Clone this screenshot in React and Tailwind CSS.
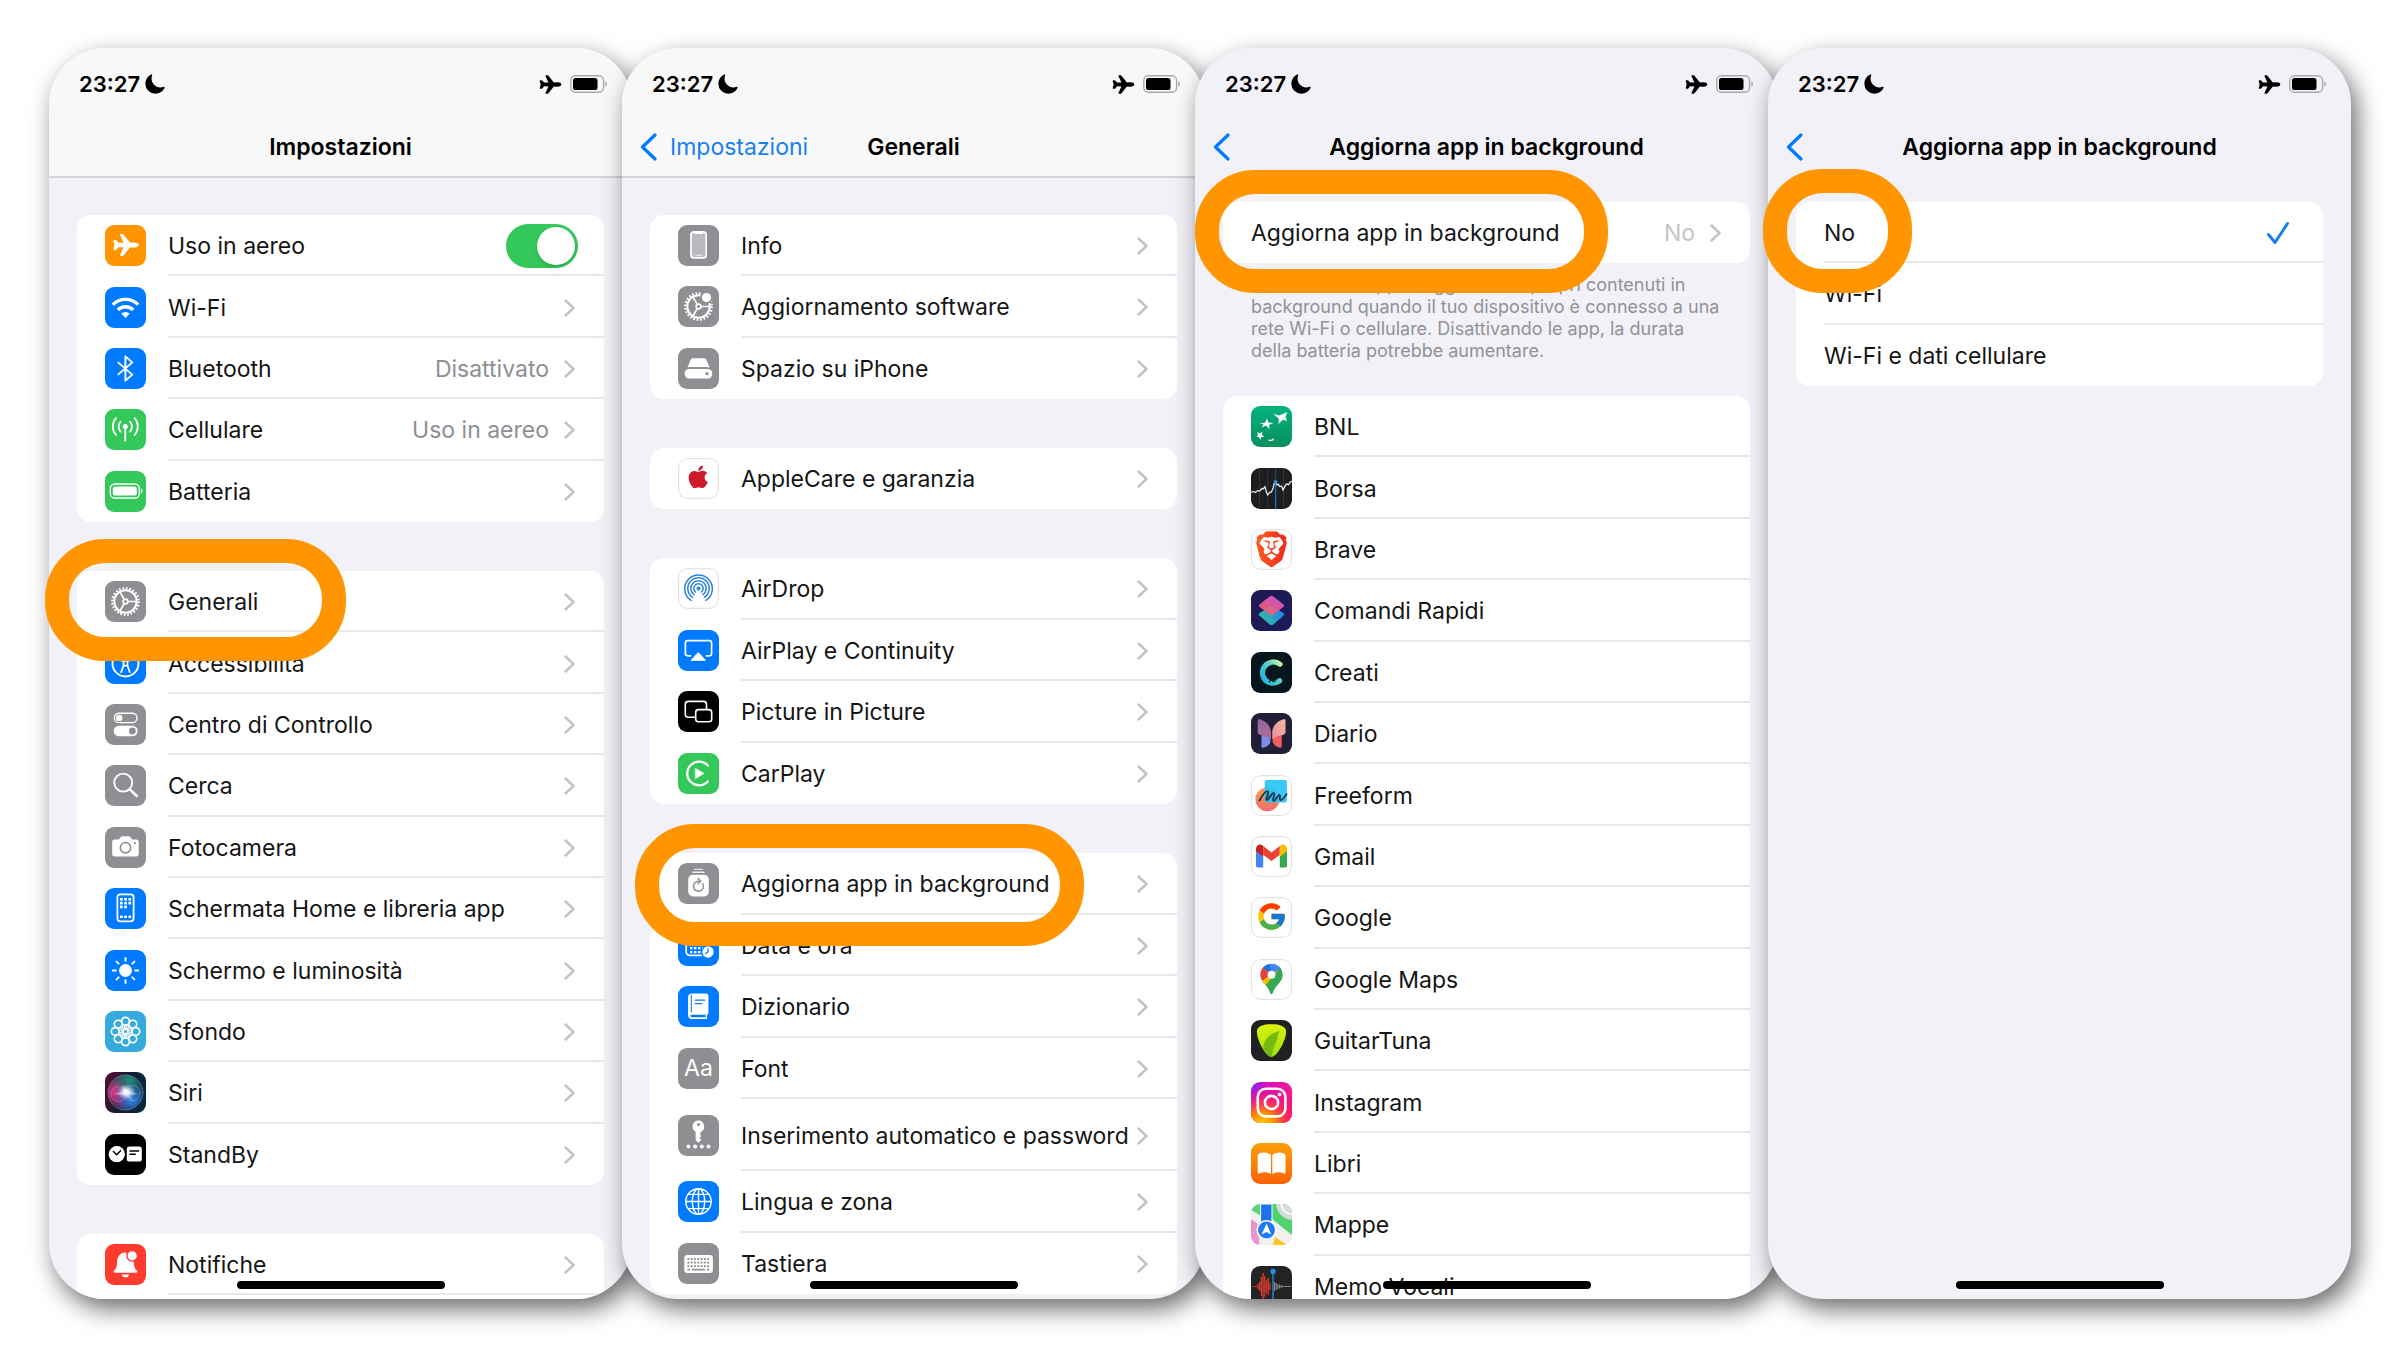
import { FaApple } from 'react-icons/fa';
import { FcGoogle } from 'react-icons/fc';
import { IoAirplane, IoMoon } from 'react-icons/io5';
import { SiBrave } from 'react-icons/si';

const BLUE = '#007aff';
const GRAY = '#8e8e93';
const GREEN = '#34c759';

// Rounded app tile, glyphs are drawn on a 41x41 grid
const Tile = ({ bg = '#fff', outlined, children }) => (
  <svg viewBox="0 0 41 41" className="w-[41px] h-[41px] shrink-0 rounded-[9px]" aria-hidden="true" fill="none" strokeLinecap="round" strokeLinejoin="round">
    <rect width="41" height="41" fill={bg} />
    {children}
    {outlined && <rect x="0.6" y="0.6" width="39.8" height="39.8" rx="8.6" stroke="#e4e4e8" strokeWidth="1.2" />}
  </svg>
);

const GearShape = () => (
  <g stroke="#fff">
    <circle cx="20.5" cy="20.5" r="13.2" strokeWidth="2.4" strokeDasharray="1.7 1.755" strokeLinecap="butt" />
    <circle cx="20.5" cy="20.5" r="11.2" strokeWidth="2" />
    <circle cx="20.5" cy="20.5" r="2.4" strokeWidth="1.6" />
    <path d="M23 20.5h9M19.2 18.3l-4.5-7.8M19.2 22.7l-4.5 7.8" strokeWidth="1.7" />
  </g>
);

/* ---------- Impostazioni ---------- */

const AirplaneIcon = () => (
  <Tile bg="#ff9500">
    <IoAirplane x="7.5" y="6.5" size={27} color="#fff" />
  </Tile>
);

const WifiIcon = () => (
  <Tile bg={BLUE}>
    <g stroke="#fff" strokeWidth="3.4" strokeLinecap="butt">
      <path d="M7.8 17.6a18 18 0 0 1 25.4 0" />
      <path d="M12.8 22.9a11 11 0 0 1 15.4 0" />
    </g>
    <path d="M20.5 31l-4.2-4.4a6 6 0 0 1 8.4 0z" fill="#fff" />
  </Tile>
);

const BluetoothIcon = () => (
  <Tile bg={BLUE}>
    <path d="M13.3 14.6L27.3 26.6 20.4 32.6V8.4L27.3 14.4 13.3 26.4" stroke="#fff" strokeWidth="1.9" />
  </Tile>
);

const CellularIcon = () => (
  <Tile bg={GREEN}>
    <circle cx="20.3" cy="17.6" r="2.5" fill="#fff" />
    <g stroke="#fff" strokeWidth="1.8">
      <path d="M20.3 18v13.5" />
      <path d="M15.6 22.6a7.4 7.4 0 0 1 0-10M25 22.6a7.4 7.4 0 0 0 0-10" />
      <path d="M11 26a12.6 12.6 0 0 1 0-16.8M29.6 26a12.6 12.6 0 0 0 0-16.8" />
    </g>
  </Tile>
);

const BatteryIcon = () => (
  <Tile bg={GREEN}>
    <rect x="5.3" y="13" width="29" height="14" rx="4.6" stroke="#fff" strokeWidth="1.4" />
    <rect x="7.8" y="15.4" width="24" height="9.2" rx="2.6" fill="#fff" />
    <path d="M35.9 17.6c2.2.8 2.2 4 0 4.8z" fill="#fff" />
  </Tile>
);

const GearIcon = () => (
  <Tile bg={GRAY}>
    <GearShape />
  </Tile>
);

const AccessibilityIcon = () => (
  <Tile bg={BLUE}>
    <circle cx="20.5" cy="20.5" r="13" stroke="#fff" strokeWidth="1.9" />
    <circle cx="20.5" cy="12.6" r="2.1" fill="#fff" />
    <path d="M13.5 16.8l5 1.2v4.6l-2.3 6.6M27.5 16.8l-5 1.2v4.6l2.3 6.6M18.5 18h4M18.5 22.6h4" stroke="#fff" strokeWidth="1.7" />
  </Tile>
);

const ControlCenterIcon = () => (
  <Tile bg={GRAY}>
    <rect x="9.4" y="9.2" width="22.6" height="9.4" rx="4.7" stroke="#fff" strokeWidth="1.4" />
    <circle cx="14.2" cy="13.9" r="3.2" fill="#fff" />
    <rect x="8.7" y="21.8" width="24" height="10.4" rx="5.2" fill="#fff" />
    <circle cx="27.4" cy="27" r="3.4" fill={GRAY} />
  </Tile>
);

const SearchIcon = () => (
  <Tile bg={GRAY}>
    <circle cx="18.2" cy="17.6" r="9" stroke="#fff" strokeWidth="1.9" />
    <path d="M25 24.6l6.8 6.4" stroke="#fff" strokeWidth="2.6" />
  </Tile>
);

const CameraIcon = () => (
  <Tile bg={GRAY}>
    <path d="M10 12.4h3.8l2-2.5c.4-.4.8-.6 1.4-.6h6.6c.6 0 1 .2 1.4.6l2 2.5H31c1.8 0 2.8 1 2.8 2.8v11.6c0 1.8-1 2.8-2.8 2.8H10c-1.8 0-2.8-1-2.8-2.8V15.2c0-1.8 1-2.8 2.8-2.8z" fill="#fff" />
    <circle cx="20.5" cy="20.7" r="5.2" stroke={GRAY} strokeWidth="1.6" />
    <circle cx="29.8" cy="16.2" r="1.1" fill={GRAY} />
  </Tile>
);

const HomeScreenIcon = () => (
  <Tile bg={BLUE}>
    <rect x="12.4" y="6.3" width="16.2" height="27" rx="3" stroke="#fff" strokeWidth="1.8" />
    <g fill="#fff">
      {[10, 13.8, 17.6].map((y) =>
        [15, 19.2, 23.4].map((x) => (
          <rect key={`${x}-${y}`} x={x} y={y} width="2.7" height="2.7" rx="0.6" opacity={y > 17 && x > 20 ? 0 : 1} />
        ))
      )}
      {[15, 19.2, 23.4].map((x) => (
        <rect key={x} x={x} y="27.6" width="2.7" height="2.4" rx="0.6" />
      ))}
    </g>
  </Tile>
);

const SunIcon = () => (
  <Tile bg={BLUE}>
    <circle cx="20.5" cy="20.5" r="6.4" fill="#fff" />
    {[0, 45, 90, 135, 180, 225, 270, 315].map((a) => (
      <path key={a} d="M20.5 7.9v2.9" stroke="#fff" strokeWidth="2" transform={`rotate(${a} 20.5 20.5)`} />
    ))}
  </Tile>
);

const WallpaperIcon = () => (
  <Tile bg="#35aadc">
    {[0, 45, 90, 135, 180, 225, 270, 315].map((a) => (
      <g key={a} transform={`rotate(${a} 20.5 20.5)`} stroke="#fff">
        <circle cx="20.5" cy="10.2" r="3.9" strokeWidth="1.7" />
        <path d="M19 14l1.5 5 1.5-5" strokeWidth="1.2" />
      </g>
    ))}
    <circle cx="20.5" cy="20.5" r="2.2" fill="#35aadc" stroke="#fff" strokeWidth="1.3" />
  </Tile>
);

const SiriIcon = () => (
  <Tile bg="url(#siriBg)">
    <defs>
      <linearGradient id="siriBg" x1="0" y1="0" x2="1" y2="0.3">
        <stop offset="0" stopColor="#5c0a2c" />
        <stop offset="0.5" stopColor="#1c1c30" />
        <stop offset="1" stopColor="#06293f" />
      </linearGradient>
      <radialGradient id="siriPink" cx="0.22" cy="0.48" r="0.6">
        <stop offset="0" stopColor="#e0388a" />
        <stop offset="1" stopColor="#e0388a" stopOpacity="0" />
      </radialGradient>
      <radialGradient id="siriTeal" cx="0.62" cy="0.15" r="0.55">
        <stop offset="0" stopColor="#1d8f7c" />
        <stop offset="1" stopColor="#1d8f7c" stopOpacity="0" />
      </radialGradient>
      <radialGradient id="siriBlue" cx="0.68" cy="0.72" r="0.5">
        <stop offset="0" stopColor="#2f86e8" />
        <stop offset="1" stopColor="#2f86e8" stopOpacity="0" />
      </radialGradient>
      <radialGradient id="siriCore">
        <stop offset="0" stopColor="#fff" />
        <stop offset="0.3" stopColor="#e8f2ff" stopOpacity="0.9" />
        <stop offset="1" stopColor="#b7c8ff" stopOpacity="0" />
      </radialGradient>
    </defs>
    <circle cx="20.5" cy="20.5" r="17.5" fill="#1b1a3a" />
    <circle cx="20.5" cy="20.5" r="17.5" fill="url(#siriPink)" />
    <circle cx="20.5" cy="20.5" r="17.5" fill="url(#siriTeal)" />
    <circle cx="20.5" cy="20.5" r="17.5" fill="url(#siriBlue)" />
    <circle cx="20.5" cy="20.5" r="17.5" stroke="#6b9aa0" strokeOpacity="0.6" />
    <circle cx="13.5" cy="22" r="7.5" stroke="#f06ab0" strokeOpacity="0.6" />
    <circle cx="27" cy="21" r="8" stroke="#51b7f0" strokeOpacity="0.5" />
    <ellipse cx="21.5" cy="20" rx="9.5" ry="8" fill="url(#siriCore)" />
    <path d="M18 13.5l5 5.5 11 3-10 1 4 6-8-5.5L9 22l8-2.5z" fill="#fff" fillOpacity="0.35" />
  </Tile>
);

const StandByIcon = () => (
  <Tile bg="#000">
    <circle cx="11.8" cy="20.2" r="8.1" fill="#fff" />
    <path d="M8.4 17.5l3.2 3.3 4-4" stroke="#000" strokeWidth="1.5" />
    <rect x="21.8" y="12.6" width="15" height="15" rx="2.6" fill="#fff" />
    <path d="M25 17h8.6M25 20.3h5.2" stroke="#000" strokeWidth="1.5" />
  </Tile>
);

const BellIcon = () => (
  <Tile bg="#ff3b30">
    <path d="M20.5 8.2c-5.6.6-8.4 4.6-8.4 9.6 0 5-1.2 7.2-3 8.8-.9.9-.4 2.2.9 2.2h21c1.3 0 1.8-1.3.9-2.2-1.8-1.6-3-3.800-3-8.800z" fill="#fff" />
    <path d="M16.800 30.600h7.400c-.4 1.900-1.900 3-3.700 3s-3.300-1.100-3.700-3z" fill="#fff" />
    <circle cx="27.2" cy="11.8" r="6" fill="#ff3b30" />
    <circle cx="27.2" cy="11.8" r="4.6" fill="#fff" />
  </Tile>
);

/* ---------- Generali ---------- */

const InfoIcon = () => (
  <Tile bg={GRAY}>
    <rect x="13" y="6.9" width="15.2" height="26" rx="3" fill="#b9b9be" stroke="#fff" strokeWidth="1.7" />
    <path d="M17.2 7.8h6.8" stroke="#fff" strokeWidth="2.4" />
    <path d="M17.6 30.3h6" stroke="#e4e4e6" strokeWidth="1.2" />
  </Tile>
);

const UpdateIcon = () => (
  <Tile bg={GRAY}>
    <GearShape />
    <circle cx="28.5" cy="11.5" r="6.3" fill={GRAY} />
    <circle cx="28.5" cy="11.5" r="4.6" fill="#fff" />
  </Tile>
);

const StorageIcon = () => (
  <Tile bg={GRAY}>
    <path d="M12.8 11.6c.3-.9 1-1.4 2-1.4h11.4c1 0 1.700.5 2 1.400l3.400 8c-.8-.4-1.800-.6-2.800-.6H12.200c-1 0-2 .2-2.800.6z" fill="#fff" />
    <rect x="6.8" y="21" width="27.4" height="9.4" rx="4.2" fill="#fff" />
    <circle cx="29" cy="25.7" r="1.6" fill={GRAY} />
  </Tile>
);

const AppleCareIcon = () => (
  <Tile outlined>
    <FaApple x="7.2" y="5.8" size={26} color="#cf1a2c" />
  </Tile>
);

const AirDropIcon = () => (
  <Tile outlined>
    <g stroke="#2f83d6" strokeWidth="1.5">
      <path d="M13.2 32.4a13.8 13.8 0 1 1 14.6 0" />
      <path d="M14.6 29.3a10.7 10.7 0 1 1 11.8 0" />
      <path d="M16 26.6a7.7 7.7 0 1 1 9 0" />
      <path d="M17.5 24a4.7 4.7 0 1 1 6 0" />
    </g>
    <circle cx="20.5" cy="20.5" r="2" fill="#2f83d6" />
  </Tile>
);

const AirPlayIcon = () => (
  <Tile bg={BLUE}>
    <path d="M12.6 25.8H9.6c-1.4 0-2.2-.8-2.2-2.2V12.9c0-1.4.8-2.2 2.2-2.2h21.8c1.4 0 2.2.8 2.2 2.2v10.7c0 1.4-.8 2.2-2.2 2.2h-3" stroke="#fff" strokeWidth="1.7" />
    <path d="M20.5 22.8l7 7.5h-14z" fill="#fff" stroke="#fff" strokeWidth="1" />
  </Tile>
);

const PipIcon = () => (
  <Tile bg="#000">
    <rect x="7.3" y="10.4" width="21.2" height="15.8" rx="3" stroke="#fff" strokeWidth="1.6" />
    <rect x="17.7" y="18.6" width="16" height="12.2" rx="2.8" fill="#000" stroke="#fff" strokeWidth="1.6" />
  </Tile>
);

const CarPlayIcon = () => (
  <Tile bg={GREEN}>
    <path d="M29.8 12.6a11.8 11.8 0 1 0 0 15.8" stroke="#fff" strokeWidth="2.3" />
    <path d="M17.6 15.6l8.2 4.9-8.2 4.9z" fill="#fff" stroke="#fff" strokeWidth="0.8" />
  </Tile>
);

const RefreshIcon = () => (
  <Tile bg={GRAY}>
    <path d="M16.4 6.3h8.2" stroke="#fff" strokeWidth="1.3" opacity="0.7" />
    <path d="M14.8 9.2h11.4" stroke="#fff" strokeWidth="1.5" opacity="0.85" />
    <rect x="10.2" y="11.8" width="20.6" height="21.6" rx="4.6" fill="#fff" />
    <path d="M24.9 20.8a5 5 0 1 1-4.4-2.6h.8" stroke={GRAY} strokeWidth="1.5" />
    <path d="M20 15.4l2.9 2.7-2.8 2.7" stroke={GRAY} strokeWidth="1.4" />
  </Tile>
);

const DateIcon = () => (
  <Tile bg={BLUE}>
    <rect x="8.2" y="9" width="23.6" height="21.4" rx="3.6" stroke="#fff" strokeWidth="1.7" />
    <path d="M8.6 12.6h23" stroke="#fff" strokeWidth="4" />
    <g fill="#fff">
      {[18, 22, 26].map((y) => [12, 16, 20, 24].map((x) => <rect key={`${x}-${y}`} x={x} y={y} width="2.5" height="2.3" rx="0.5" />))}
    </g>
    <circle cx="30" cy="27" r="7" fill={BLUE} />
    <circle cx="30" cy="27" r="5.7" fill="#fff" />
    <path d="M30 23.6V27l-2.4 1.6" stroke={BLUE} strokeWidth="1.2" />
  </Tile>
);

const DictionaryIcon = () => (
  <Tile bg={BLUE}>
    <path d="M14 7.6h14c1.6 0 2.4.8 2.4 2.4v16.4c0 1.2-.5 2-1.4 2.3v3.3c0 .6.5 1 1 1H14c-2.4 0-4-1.5-4-3.8V11c0-2.2 1.6-3.4 4-3.4z" fill="#fff" />
    <path d="M13.3 9v17" stroke={BLUE} strokeWidth="1" />
    <path d="M27.6 28.8H14c-1 0-1.6.5-1.6 1.2s.6 1.2 1.6 1.2h13.6z" fill={BLUE} />
    <path d="M17.3 14.2h9.4M17.3 17.6h6.4" stroke={BLUE} strokeWidth="1.3" />
  </Tile>
);

const FontIcon = () => (
  <span className="flex items-center justify-center w-[41px] h-[41px] shrink-0 rounded-[9px] bg-[#8e8e93] text-white text-[23px] leading-none" aria-hidden="true">
    Aa
  </span>
);

const KeyIcon = () => (
  <Tile bg={GRAY}>
    <path d="M20.5 5.6a6 6 0 0 0-2.9 11.2v8.4l2.9 2.6 2.8-2.9-1.8-1.9 1.8-2-1.5-1.5 1.4-2.7A6 6 0 0 0 20.5 5.6z" fill="#fff" />
    <circle cx="20.5" cy="9.6" r="1.5" fill={GRAY} />
    {[10.4, 17.1, 23.8, 30.5].map((x) => (
      <circle key={x} cx={x} cy="31.5" r="2" fill="#fff" />
    ))}
  </Tile>
);

const GlobeIcon = () => (
  <Tile bg={BLUE}>
    <g stroke="#fff" strokeWidth="1.4">
      <circle cx="20.5" cy="20.5" r="12.7" />
      <ellipse cx="20.5" cy="20.5" rx="6.2" ry="12.7" />
      <path d="M20.5 7.8v25.4M7.8 20.5h25.4M10.2 13.4h20.6M10.2 27.6h20.6" />
    </g>
  </Tile>
);

const KeyboardIcon = () => (
  <Tile bg={GRAY}>
    <rect x="6.3" y="12" width="28.6" height="18" rx="3" fill="#fff" />
    <g fill={GRAY}>
      {[15, 18.6, 22.2].map((y) => [9.4, 12.7, 16, 19.3, 22.6, 25.9, 29.2].map((x) => <rect key={`${x}-${y}`} x={x} y={y} width="1.9" height="1.9" />))}
      <rect x="14" y="25.8" width="13" height="1.7" />
      <rect x="9.4" y="25.8" width="2.2" height="1.7" />
      <rect x="29" y="25.8" width="2.2" height="1.7" />
    </g>
  </Tile>
);

/* ---------- App icons ---------- */

const BnlIcon = () => (
  <Tile bg="url(#bnl)">
    <linearGradient id="bnl" x1="0" y1="0" x2="0" y2="1">
      <stop offset="0" stopColor="#04b381" />
      <stop offset="1" stopColor="#088f5c" />
    </linearGradient>
    <g fill="#fff">
      <path d="M22.5 8l5.6 1.4L36.500 6l-2 4.600 1.600 4.400-4.400-1.300-4.200 4.300.4-5z" />
      <path d="M8.500 17.200l5.200-.3 2.400-4.500 1.200 4.200 5.400.4-4.600 1.700.4 4.300-3.600-3.400-4.500 2 2.200-3.200z" />
      <path d="M6 26.200l3 1.300 2.400-2-.4 3.200 2.200 2.200-3 .2-.6 2.600-1.800-2.600-2.200-.4 1.500-1.700z" />
      <path d="M17 33.600l2.500.3 3.600-2-.9 2.600-2.800.8-1.800-.5z" />
    </g>
  </Tile>
);

const StocksIcon = () => (
  <Tile bg="#1d1d1f">
    <path d="M8.5 0v41M16.7 0v41M32.5 0v41" stroke="#343437" />
    <path d="M24.6 13v28" stroke="#1777b5" strokeWidth="1.3" />
    <path d="M24.6 0v14" stroke="#1f4a66" strokeWidth="1.3" />
    <path d="M0 24.5l2.5-1 1.8 1 2.6-2 1.8.6 2.2-2.6 1.4.3 1.6-2.3 1.5 5.6 1.3 3 1.8-2.6 1.9-.5 1.7-3.7 1-4.6 1.5-1.2 1.3 2.3 1.6-.6 1.3 2.5 1.9-.6 1.300 4.200 2-4.200 1.700-2.400 1.900 1.200 1.300-2.700 2.100-.9" stroke="#e8e8ea" strokeWidth="1.3" />
    <circle cx="24.6" cy="14" r="1.9" fill="#2196e0" />
  </Tile>
);

const BraveIcon = () => (
  <Tile outlined>
    <linearGradient id="brave" x1="0" y1="0" x2="1" y2="0">
      <stop offset="0" stopColor="#ff5a1f" />
      <stop offset="1" stopColor="#ee2a1c" />
    </linearGradient>
    <SiBrave x="2.5" y="2.2" size={36} fill="url(#brave)" />
  </Tile>
);

const ShortcutsIcon = () => (
  <Tile bg="#1e1a56">
    <defs>
      <linearGradient id="scTop" x1="0.8" y1="0" x2="0.2" y2="1">
        <stop offset="0" stopColor="#d658e0" />
        <stop offset="0.45" stopColor="#e85a9c" />
        <stop offset="1" stopColor="#f0655a" />
      </linearGradient>
      <linearGradient id="scBottom" x1="0" y1="0.8" x2="1" y2="0.2">
        <stop offset="0" stopColor="#36c49a" />
        <stop offset="1" stopColor="#1f7df0" />
      </linearGradient>
    </defs>
    <path d="M18.7 16.6c1.2-.7 2.4-.7 3.6 0l10 6.4c1.3.9 1.3 1.9 0 2.8l-10 8.6c-1.2.9-2.4.9-3.6 0l-10-8.6c-1.3-.9-1.3-1.9 0-2.8z" fill="url(#scBottom)" />
    <path d="M18.7 6.4c1.2-.9 2.4-.9 3.6 0l10 7.8c1.3.9 1.3 1.9 0 2.8l-10 7.6c-1.2.9-2.4.9-3.6 0l-10-7.6c-1.3-.9-1.3-1.9 0-2.8z" fill="url(#scTop)" fillOpacity="0.93" />
  </Tile>
);

const CreatiIcon = () => (
  <Tile bg="#07161c">
    <linearGradient id="creati" x1="1" y1="0" x2="0.1" y2="0.8">
      <stop offset="0" stopColor="#c8f5b0" />
      <stop offset="0.4" stopColor="#5fd8c0" />
      <stop offset="1" stopColor="#2cb6dc" />
    </linearGradient>
    <path d="M29 12.2c-5.500-4.300-13-2.200-16.200 3.400-3 5.600-.6 12.600 4.800 14.800 4.200 1.500 7.800.8 11-1.600" stroke="url(#creati)" strokeWidth="5.2" />
    <path d="M18.5 29.8l2-2.6 1.7 2.4 2.4-.8" stroke="#07161c" strokeWidth="1.2" />
  </Tile>
);

const JournalIcon = () => (
  <Tile bg="#211f38">
    <defs>
      <linearGradient id="jL" x1="0" y1="0" x2="0" y2="1">
        <stop offset="0" stopColor="#8d6aa0" />
        <stop offset="1" stopColor="#b56a92" />
      </linearGradient>
      <linearGradient id="jR" x1="1" y1="0" x2="0" y2="1">
        <stop offset="0" stopColor="#f5b7a0" />
        <stop offset="1" stopColor="#ea8f95" />
      </linearGradient>
    </defs>
    <path d="M6.7 7.6c0-1.2.8-1.7 2-1.3 6 2 10.5 5.8 11.3 12.4v7.8L8.3 21.5c-1-.5-1.6-1.3-1.6-2.5z" fill="url(#jL)" />
    <path d="M34.5 7.6c0-1.2-.8-1.7-2-1.3-6 2-10.5 5.8-11.3 12.4v7.8l11.7-5c1-.5 1.6-1.3 1.6-2.5z" fill="url(#jR)" />
    <path d="M10.5 22.4c5.4 1 8.8 2.4 9.2 5.6-.8 3.8-3.4 5.9-7.4 6.7-1.2.2-1.8-.4-1.8-1.5z" fill="#7d8bea" />
    <path d="M30.7 22.4c-5.4 1-8.8 2.4-9.2 5.6.8 3.8 3.4 5.9 7.4 6.7 1.2.2 1.8-.4 1.8-1.5z" fill="#f0605c" />
  </Tile>
);

const FreeformIcon = () => (
  <Tile outlined>
    <linearGradient id="ffBall" x1="0" y1="0" x2="0" y2="1">
      <stop offset="0" stopColor="#f9a04c" />
      <stop offset="1" stopColor="#f76a6c" />
    </linearGradient>
    <circle cx="16.5" cy="24.2" r="12" fill="url(#ffBall)" />
    <rect x="13.7" y="5" width="22.2" height="22.4" rx="1.8" fill="#27c4f5" fillOpacity="0.92" />
    <path d="M8.5 25.5c3-5.6 6.5-9.8 8.3-9 2.2 1-3.2 8-1 8.4 2 .3 4.8-7.6 7-6.8 1.8.7-2 7.2-.2 7.7 2 .5 4.2-6.4 5.9-5.8 1.5.6-.8 4.6 1 5 1.7.4 4-3 6-5.8" stroke="#173a56" strokeWidth="1.9" />
  </Tile>
);

const GmailIcon = () => (
  <Tile outlined>
    <path d="M5 14.5v15.3c0 1 .7 1.7 1.7 1.7h5.5V18.5z" fill="#4285f4" />
    <path d="M36 14.5v15.3c0 1-.7 1.7-1.7 1.7h-5.5V18.5z" fill="#34a853" />
    <path d="M28.8 10l-8.3 6.4L12.2 10v8.7l8.3 6.3 8.3-6.3z" fill="#ea4335" />
    <path d="M5 13v2.3l7.2 5.4V10l-1-.8C8.6 7.3 5 9.3 5 13z" fill="#c5221f" />
    <path d="M36 13v2.3l-7.2 5.4V10l1-.8C32.4 7.3 36 9.3 36 13z" fill="#fbbc04" />
  </Tile>
);

const GoogleIcon = () => (
  <Tile outlined>
    <FcGoogle x="4.5" y="3.5" size={32} />
  </Tile>
);

const GoogleMapsIcon = () => (
  <Tile outlined>
    <clipPath id="pin">
      <path d="M20.5 5C14.2 5 9.5 9.7 9.5 15.7c0 4.3 2.3 6.9 4.9 10 2.5 2.9 4 4.8 4.9 8.3.4 1.4 2 1.4 2.4 0 .9-3.5 2.4-5.4 4.9-8.3 2.6-3.1 4.9-5.7 4.9-10C31.5 9.7 26.8 5 20.5 5z" />
    </clipPath>
    <g clipPath="url(#pin)">
      <rect x="8" y="3" width="25" height="34" fill="#34a853" />
      <path d="M8 3h18l-5.5 12.5L12 9z" fill="#1a73e8" />
      <path d="M18 3h12l2 8-11.5 4.5z" fill="#4285f4" />
      <path d="M12 8.5l8.5 7L11 26l-4-6V12z" fill="#ea4335" />
      <path d="M20.5 15.5L10.5 22l3.5 5.5L28 10.5z" fill="#fbbc04" />
      <path d="M30 8L14 27l6 9 14-20z" fill="#34a853" />
    </g>
    <circle cx="20.5" cy="15.7" r="3.9" fill="#fff" />
  </Tile>
);

const GuitarTunaIcon = () => (
  <Tile bg="#201f22">
    <linearGradient id="pick" x1="0" y1="0" x2="0" y2="1">
      <stop offset="0" stopColor="#dcf20c" />
      <stop offset="1" stopColor="#9be010" />
    </linearGradient>
    <path d="M20.5 4.3c8.6 0 14.6 1.8 14.6 7.6 0 8-8.8 24.9-14.6 24.9S5.9 19.9 5.9 11.9c0-5.8 6-7.6 14.600-7.600z" fill="url(#pick)" />
    <path d="M12 28.500c1-8.500 6-15 17-17.500-3 3.500-1.400 6.600-4.600 12.500-1.800 3.400-3 8-3.400 13.200-3 .5-6.400-3.800-9-8.200z" fill="#76b90f" />
  </Tile>
);

const InstagramIcon = () => (
  <Tile bg="url(#igBase)">
    <defs>
      <linearGradient id="igBase" x1="0" y1="0" x2="1" y2="0.6">
        <stop offset="0" stopColor="#7a28f0" />
        <stop offset="0.35" stopColor="#e010c0" />
        <stop offset="1" stopColor="#fb1a74" />
      </linearGradient>
      <radialGradient id="igWarm" cx="0.28" cy="1.05" r="0.9">
        <stop offset="0" stopColor="#ffd600" />
        <stop offset="0.35" stopColor="#ff8a00" />
        <stop offset="0.7" stopColor="#ff2a50" stopOpacity="0.6" />
        <stop offset="1" stopColor="#ff0069" stopOpacity="0" />
      </radialGradient>
    </defs>
    <rect width="41" height="41" fill="url(#igWarm)" />
    <rect x="6.8" y="6.8" width="27.6" height="27.6" rx="8" stroke="#fff" strokeWidth="2.6" />
    <circle cx="20.5" cy="20.5" r="6.6" stroke="#fff" strokeWidth="2.6" />
    <circle cx="28.6" cy="12.6" r="1.9" fill="#fff" />
  </Tile>
);

const BooksIcon = () => (
  <Tile bg="url(#books)">
    <linearGradient id="books" x1="0" y1="0" x2="0" y2="1">
      <stop offset="0" stopColor="#ff9f0a" />
      <stop offset="1" stopColor="#f96208" />
    </linearGradient>
    <path d="M19.9 12.2c-3-3.2-9-3.6-12.3-1.2-.6.5-.9 1-.9 1.8v16.7c0 1 .8 1.3 1.6.9 3.6-1.7 8.2-1.5 11.6.8z" fill="#fff" />
    <path d="M21.3 12.2c3-3.2 9-3.6 12.3-1.2.6.5.9 1 .9 1.8v16.7c0 1-.8 1.3-1.6.9-3.6-1.7-8.2-1.5-11.6.8z" fill="#fff" />
  </Tile>
);

const MapsIcon = () => (
  <Tile bg="#f1f1f0">
    <path d="M0 0h10v12L0 6z" fill="#5fd37a" />
    <path d="M21 0h20v31L21 15z" fill="#4fd36c" />
    <path d="M25 0a17 17 0 0 0 16 16V0z" fill="#d5dadb" />
    <path d="M30 0a11 11 0 0 0 11 10" stroke="#fff" strokeWidth="1.5" />
    <path d="M0 15l11 8v18H0z" fill="#e993cf" />
    <path d="M8 28h3v13H8z" fill="#eaeaea" />
    <path d="M22 41l2-8 12 8z" fill="#ffc21f" />
    <path d="M10 0h11v22H10z" fill="#1f73e8" stroke="#fff" strokeWidth="1" />
    <path d="M19 14l22 19v8z" fill="#efefef" />
    <circle cx="15.5" cy="26" r="9.3" fill="#1f7bf2" stroke="#fff" strokeWidth="1.6" />
    <path d="M15.5 19.6l4.8 11-4.8-2.600-4.800 2.600z" fill="#fff" />
  </Tile>
);

const VoiceMemosIcon = () => (
  <Tile bg="#232326">
    <path d="M1.5 20.5h5" stroke="#b5372c" strokeWidth="1.2" />
    {[[7, 2], [8.7, 4], [10.4, 9], [12.1, 13], [13.8, 10], [15.5, 6], [17.2, 8], [18.9, 3]].map(([x, h]) => (
      <path key={x} d={`M${x} ${20.5 - h}v${h * 2}`} stroke="#d6392f" strokeWidth="1.4" />
    ))}
    {[[23.5, 4], [25.2, 3], [26.9, 2], [28.6, 1.4], [30.3, 1]].map(([x, h]) => (
      <path key={x} d={`M${x} ${20.5 - h}v${h * 2}`} stroke="#85858a" strokeWidth="1.2" />
    ))}
    <path d="M31 20.5h8.5" stroke="#85858a" />
    <path d="M22 6v35" stroke="#1c94dc" strokeWidth="1.3" />
    <circle cx="22" cy="5.5" r="2.7" fill="#1c94dc" />
  </Tile>
);

/* ---------- Shared pieces ---------- */

const Chevron = () => (
  <svg viewBox="0 0 11 18" className="w-[11px] h-[18px] shrink-0" fill="none" stroke="#c3c3c7" strokeWidth="2.4" strokeLinecap="round" strokeLinejoin="round" aria-hidden="true">
    <path d="M1.5 1.5L9.5 9l-8 7.5" />
  </svg>
);

const StatusBar = () => (
  <div className="flex items-center justify-between h-[72px] pl-[30px] pr-6">
    <div className="flex items-center gap-1">
      <span className="text-[22px] leading-7 font-semibold text-black">23:27</span>
      <IoMoon size={22} color="#000" aria-hidden="true" />
    </div>
    <div className="flex items-center gap-2">
      <IoAirplane size={23} color="#000" aria-hidden="true" />
      <svg viewBox="0 0 38 18" className="w-[38px] h-[18px]" fill="none" aria-hidden="true">
        <rect x="0.8" y="0.8" width="32.8" height="16.4" rx="4.6" stroke="#a9a9ab" strokeWidth="1.4" />
        <rect x="3" y="3" width="24.5" height="12" rx="2.6" fill="#000" />
        <path d="M35.3 6.2c2.2.9 2.2 4.7 0 5.6z" fill="#a9a9ab" />
      </svg>
    </div>
  </div>
);

const NavBar = ({ title, back, backLabel }) => (
  <div className="grid grid-cols-[1fr_auto_1fr] items-center h-[54px]">
    <div className="flex pl-[18px]">
      {back && (
        <a href="#indietro" aria-label={backLabel ? undefined : 'Indietro'} className="flex items-center gap-[13px] text-[23px] leading-7 text-[#1a7fee]">
          <svg viewBox="0 0 17 28" className="w-[17px] h-7" fill="none" stroke="#007aff" strokeWidth="3.2" strokeLinecap="round" strokeLinejoin="round" aria-hidden="true">
            <path d="M15 2L2.5 14 15 26" />
          </svg>
          {backLabel}
        </a>
      )}
    </div>
    <h1 className="text-[23px] leading-7 font-semibold text-black whitespace-nowrap">{title}</h1>
    <div />
  </div>
);

const Phone = ({ title, back, backLabel, bar, ring, children }) => (
  <section className="relative flex-1 min-w-0 not-first:-ml-[10px]">
    <div className="relative flex flex-col h-full overflow-hidden rounded-[56px] bg-[#f2f1f8] shadow-[6px_10px_24px_rgba(0,0,0,0.58)]">
      <header className={bar ? 'shrink-0 h-[130px] bg-[#f8f8f9] border-b-2 border-[#d3d3d9]' : 'shrink-0 h-[130px]'}>
        <StatusBar />
        <NavBar title={title} back={back} backLabel={backLabel} />
      </header>
      <div className={bar ? 'flex flex-col gap-[49px] px-7 pt-[37px]' : 'flex flex-col px-7 pt-6'}>{children}</div>
      <div className="absolute bottom-[10px] left-1/2 w-[208px] h-2 -translate-x-1/2 rounded-full bg-black" />
    </div>
    {/* highlighted step */}
    <div className={`absolute border-24 border-[#ff9500] rounded-[60px] pointer-events-none ${ring}`} />
  </section>
);

const Card = ({ size, children }) => (
  <ul className={`flex flex-col shrink-0 overflow-hidden rounded-[14px] bg-white ${size}`}>{children}</ul>
);

const rowText = 'flex flex-1 items-center min-w-0 pt-[3px] pr-[29px] text-[23px] leading-7 text-[#151516] border-b-2 border-[#e8e8eb]';

const Row = ({ icon: Icon, label, value, muted, tall, open }) => (
  <li className={tall ? 'flex grow-0 basis-[72px]' : 'flex flex-1'}>
    <a href="#voce" className="flex flex-1 min-w-0 pl-7 gap-[22px]">
      {Icon && <span className="flex items-center"><Icon /></span>}
      <span className={open ? rowText : `${rowText} [li:last-child>a>&]:border-transparent`}>
        <span className="flex-1 whitespace-nowrap">{label}</span>
        {value && <span className={muted ? 'mr-[15px] text-[#c4c4c7]' : 'mr-[15px] text-[#8e8e93]'}>{value}</span>}
        <Chevron />
      </span>
    </a>
  </li>
);

const ToggleRow = ({ icon: Icon, label }) => (
  <li className="flex flex-1 pl-7 gap-[22px]">
    <span className="flex items-center"><Icon /></span>
    <label className="flex flex-1 items-center justify-between pt-[3px] pr-[26px] text-[23px] leading-7 text-[#151516] border-b-2 border-[#e8e8eb]">
      {label}
      <input
        type="checkbox"
        role="switch"
        defaultChecked
        className="appearance-none w-[72px] h-11 rounded-full bg-[#d1d1d6] checked:bg-[#34c759] before:block before:m-[3px] before:size-[38px] before:rounded-full before:bg-white before:shadow-md checked:before:ml-[31px]"
      />
    </label>
  </li>
);

const AppRow = ({ icon: Icon, label }) => (
  <li className="flex flex-1 pl-7 gap-[22px]">
    <span className="flex items-center"><Icon /></span>
    <span className={rowText}>{label}</span>
  </li>
);

const OptionRow = ({ label, checked }) => (
  <li className="flex flex-1 pl-7">
    <label className={`${rowText} justify-between [li:last-child>&]:border-transparent`}>
      {label}
      <input type="radio" name="aggiorna" defaultChecked={checked} className="peer sr-only" />
      <svg viewBox="0 0 24 24" className="hidden peer-checked:block size-6 mr-1" fill="none" stroke="#1a7fee" strokeWidth="3" strokeLinecap="round" strokeLinejoin="round" aria-hidden="true">
        <path d="M2.5 13.5L9 21.5 21.5 2.5" />
      </svg>
    </label>
  </li>
);

const apps = [
  { label: 'BNL', icon: BnlIcon },
  { label: 'Borsa', icon: StocksIcon },
  { label: 'Brave', icon: BraveIcon },
  { label: 'Comandi Rapidi', icon: ShortcutsIcon },
  { label: 'Creati', icon: CreatiIcon },
  { label: 'Diario', icon: JournalIcon },
  { label: 'Freeform', icon: FreeformIcon },
  { label: 'Gmail', icon: GmailIcon },
  { label: 'Google', icon: GoogleIcon },
  { label: 'Google Maps', icon: GoogleMapsIcon },
  { label: 'GuitarTuna', icon: GuitarTunaIcon },
  { label: 'Instagram', icon: InstagramIcon },
  { label: 'Libri', icon: BooksIcon },
  { label: 'Mappe', icon: MapsIcon },
  { label: 'Memo Vocali', icon: VoiceMemosIcon },
];

const App = () => {
  return (
    <main className="flex h-screen px-[49px] pt-12 pb-[49px] bg-white font-[Inter,'Liberation_Sans',sans-serif]">
      {/* Impostazioni */}
      <Phone title="Impostazioni" bar ring="-left-1 top-[491px] w-[301px] h-[122px]">
        <Card size="min-h-[307px]">
          <ToggleRow icon={AirplaneIcon} label="Uso in aereo" />
          <Row icon={WifiIcon} label="Wi-Fi" />
          <Row icon={BluetoothIcon} label="Bluetooth" value="Disattivato" />
          <Row icon={CellularIcon} label="Cellulare" value="Uso in aereo" />
          <Row icon={BatteryIcon} label="Batteria" />
        </Card>
        <Card size="min-h-[614px]">
          <Row icon={GearIcon} label="Generali" />
          <Row icon={AccessibilityIcon} label="Accessibilità" />
          <Row icon={ControlCenterIcon} label="Centro di Controllo" />
          <Row icon={SearchIcon} label="Cerca" />
          <Row icon={CameraIcon} label="Fotocamera" />
          <Row icon={HomeScreenIcon} label="Schermata Home e libreria app" />
          <Row icon={SunIcon} label="Schermo e luminosità" />
          <Row icon={WallpaperIcon} label="Sfondo" />
          <Row icon={SiriIcon} label="Siri" />
          <Row icon={StandByIcon} label="StandBy" />
        </Card>
        <Card size="min-h-[81px] pb-5">
          <Row icon={BellIcon} label="Notifiche" open />
        </Card>
      </Phone>

      {/* Generali */}
      <Phone title="Generali" back backLabel="Impostazioni" bar ring="left-[13px] top-[776px] w-[449px] h-[122px]">
        <Card size="min-h-[184px]">
          <Row icon={InfoIcon} label="Info" />
          <Row icon={UpdateIcon} label="Aggiornamento software" />
          <Row icon={StorageIcon} label="Spazio su iPhone" />
        </Card>
        <Card size="min-h-[61px]">
          <Row icon={AppleCareIcon} label="AppleCare e garanzia" />
        </Card>
        <Card size="min-h-[246px]">
          <Row icon={AirDropIcon} label="AirDrop" />
          <Row icon={AirPlayIcon} label="AirPlay e Continuity" />
          <Row icon={PipIcon} label="Picture in Picture" />
          <Row icon={CarPlayIcon} label="CarPlay" />
        </Card>
        <Card size="min-h-[441px]">
          <Row icon={RefreshIcon} label="Aggiorna app in background" />
          <Row icon={DateIcon} label="Data e ora" />
          <Row icon={DictionaryIcon} label="Dizionario" />
          <Row icon={FontIcon} label="Font" />
          <Row icon={KeyIcon} label="Inserimento automatico e password" tall />
          <Row icon={GlobeIcon} label="Lingua e zona" />
          <Row icon={KeyboardIcon} label="Tastiera" />
        </Card>
      </Phone>

      {/* Aggiorna app in background */}
      <Phone title="Aggiorna app in background" back ring="left-0 top-[122px] w-[413px] h-[123px]">
        <Card size="min-h-[61px]">
          <Row label="Aggiorna app in background" value="No" muted />
        </Card>
        <p className="pt-[11px] pb-[34px] pl-7 text-[18px] leading-[22px] text-[#919196] whitespace-nowrap">
          <span className="block">Consenti alle app di aggiornare i propri contenuti in</span>
          <span className="block">background quando il tuo dispositivo è connesso a una</span>
          <span className="block">rete Wi-Fi o cellulare. Disattivando le app, la durata</span>
          <span className="block">della batteria potrebbe aumentare.</span>
        </p>
        <Card size="min-h-[921px]">
          {apps.map((app) => (
            <AppRow key={app.label} icon={app.icon} label={app.label} />
          ))}
        </Card>
      </Phone>

      <Phone title="Aggiorna app in background" back ring="-left-[5px] top-[121px] w-[149px] h-[124px]">
        <Card size="min-h-[184px]">
          <OptionRow label="No" checked />
          <OptionRow label="Wi-Fi" />
          <OptionRow label="Wi-Fi e dati cellulare" />
        </Card>
      </Phone>
    </main>
  );
};

export default App;
